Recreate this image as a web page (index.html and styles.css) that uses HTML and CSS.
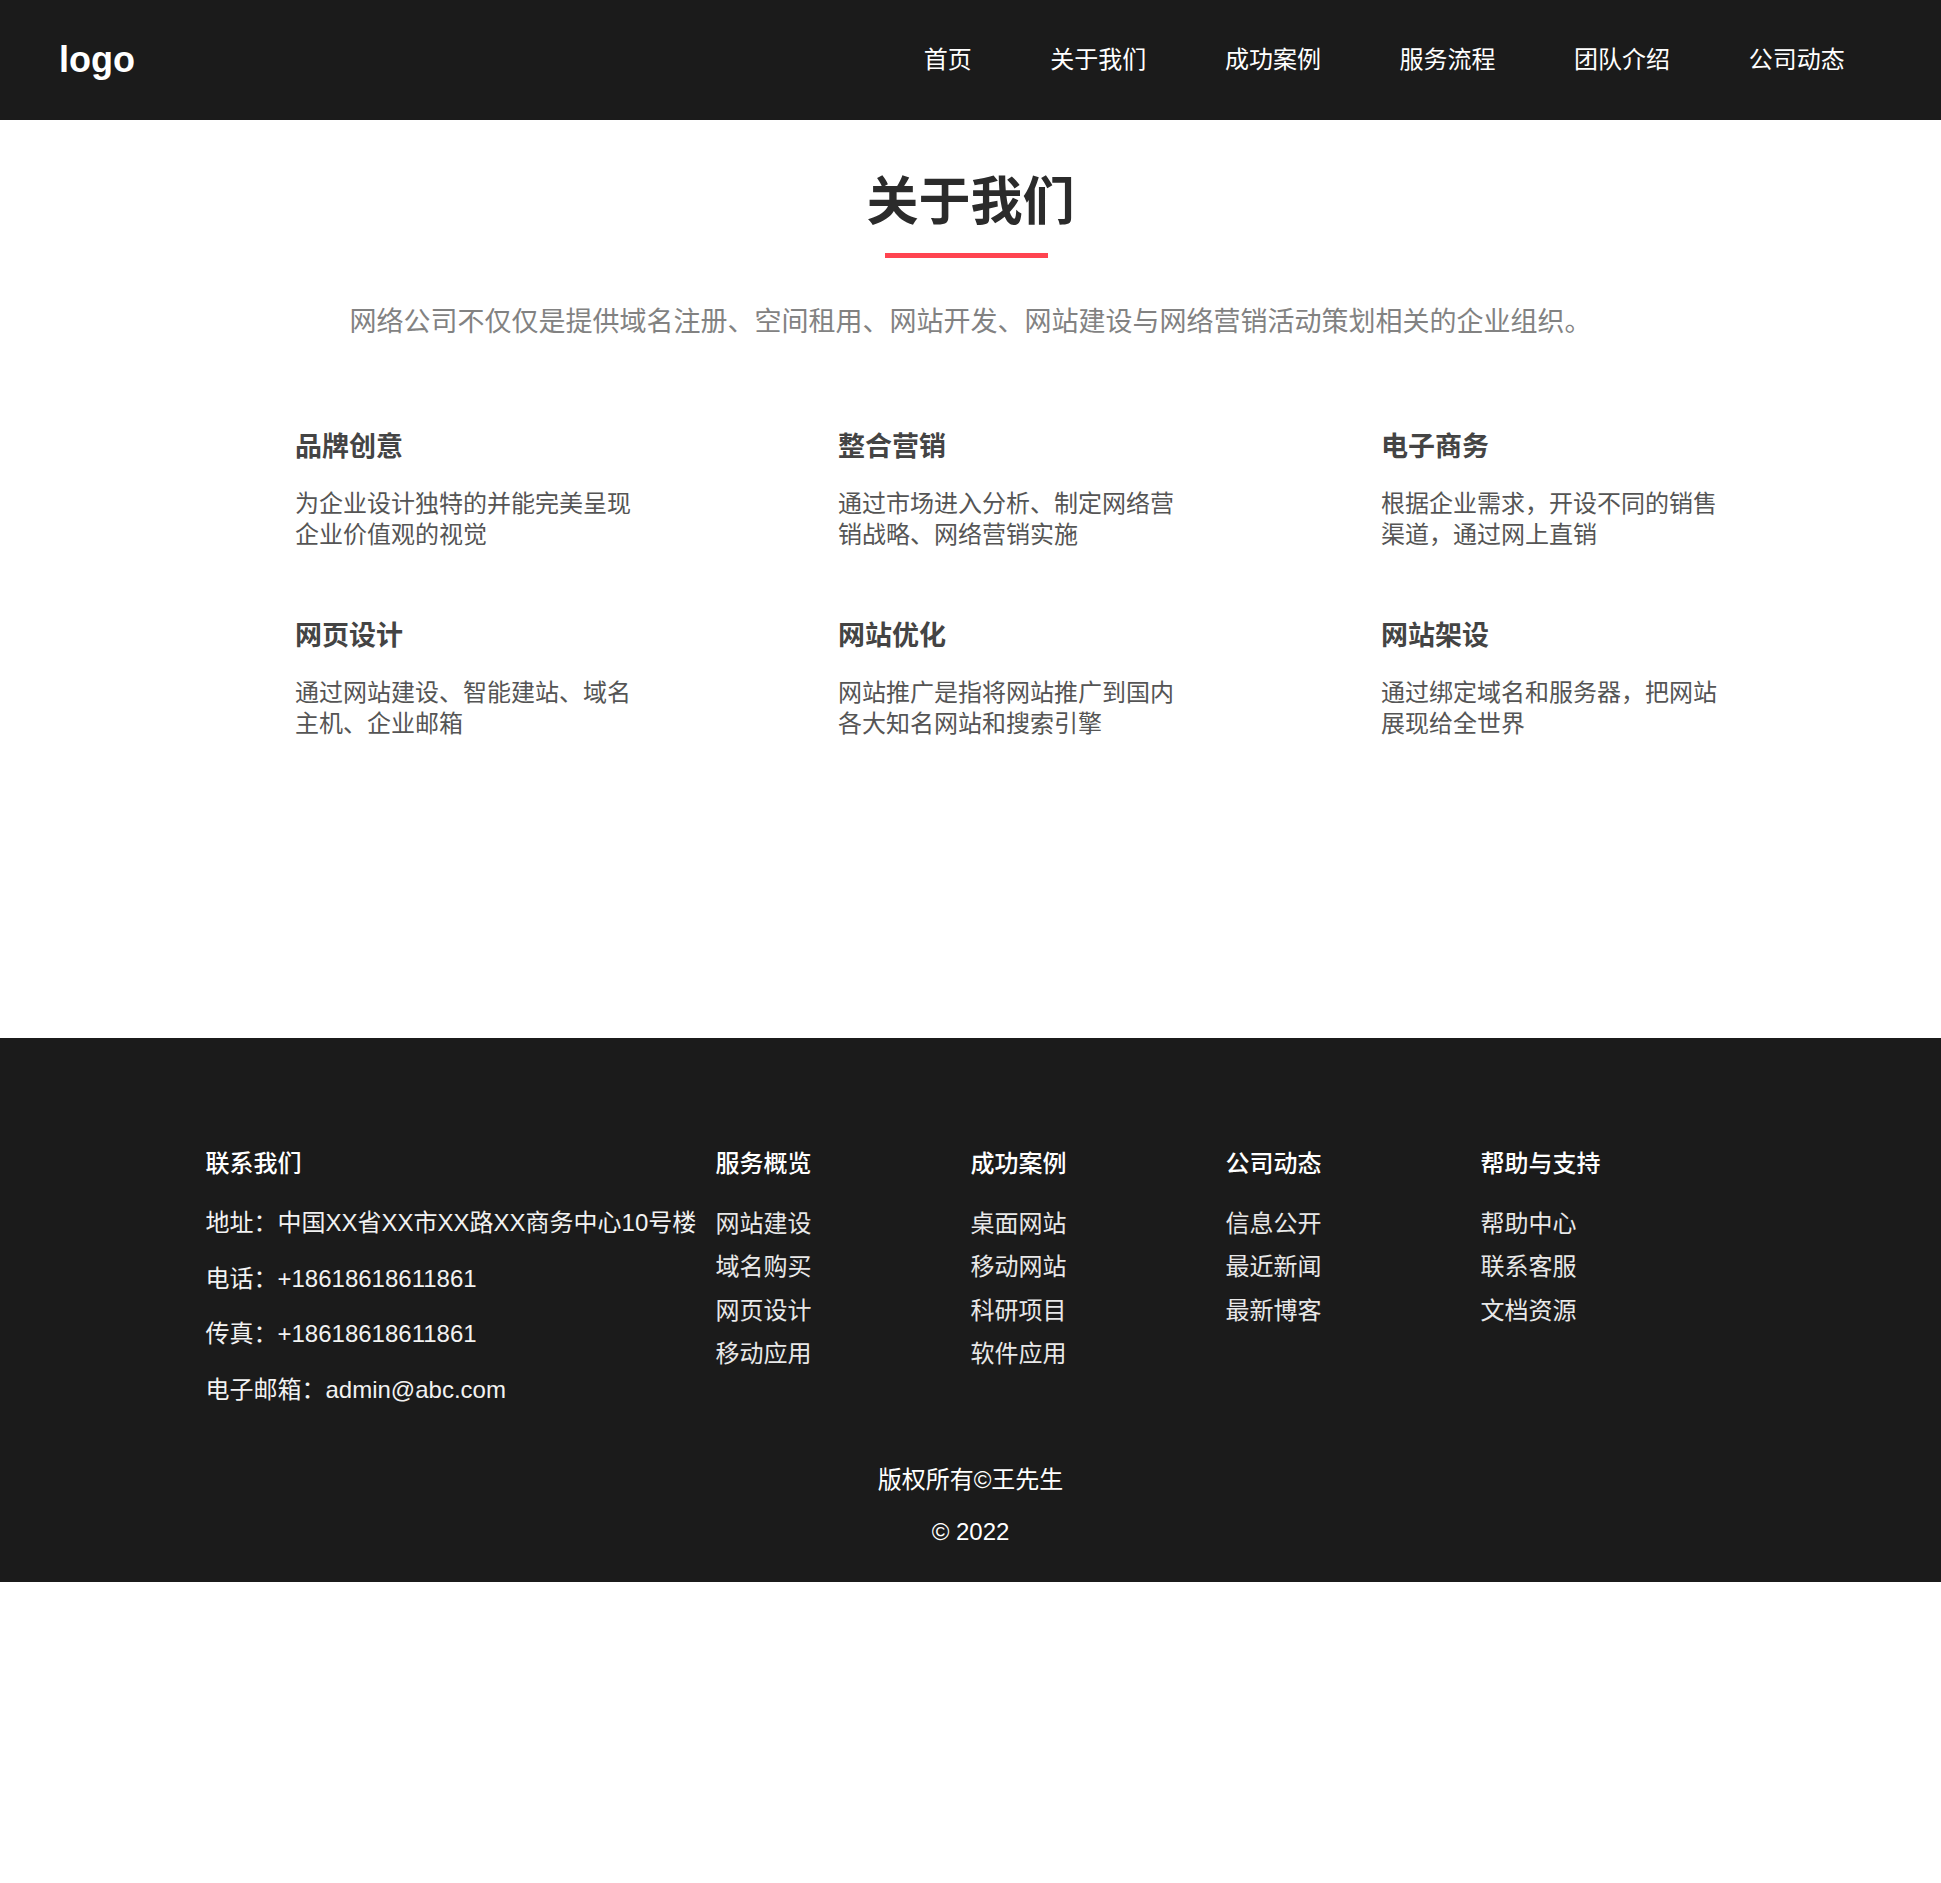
FILE: index.html
```html
<!DOCTYPE html>
<html lang="zh-CN">
<head>
<meta charset="utf-8">
<title>关于我们</title>
<link rel="stylesheet" href="styles.css">
</head>
<body>
<header class="site-header">
  <div class="logo">logo</div>
  <nav class="nav">
    <a href="#">首页</a>
    <a href="#">关于我们</a>
    <a href="#">成功案例</a>
    <a href="#">服务流程</a>
    <a href="#">团队介绍</a>
    <a href="#">公司动态</a>
  </nav>
</header>

<main class="about">
  <h1 class="about-title">关于我们</h1>
  <div class="about-line"></div>
  <p class="about-sub">网络公司不仅仅是提供域名注册、空间租用、网站开发、网站建设与网络营销活动策划相关的企业组织。</p>

  <div class="features">
    <div class="feature">
      <h3>品牌创意</h3>
      <p>为企业设计独特的并能完美呈现企业价值观的视觉</p>
    </div>
    <div class="feature">
      <h3>整合营销</h3>
      <p>通过市场进入分析、制定网络营销战略、网络营销实施</p>
    </div>
    <div class="feature">
      <h3>电子商务</h3>
      <p>根据企业需求，开设不同的销售渠道，通过网上直销</p>
    </div>
    <div class="feature">
      <h3>网页设计</h3>
      <p>通过网站建设、智能建站、域名主机、企业邮箱</p>
    </div>
    <div class="feature">
      <h3>网站优化</h3>
      <p>网站推广是指将网站推广到国内各大知名网站和搜索引擎</p>
    </div>
    <div class="feature">
      <h3>网站架设</h3>
      <p>通过绑定域名和服务器，把网站展现给全世界</p>
    </div>
  </div>
</main>

<footer class="site-footer">
  <div class="footer-cols">
    <div class="fcol contact">
      <h4>联系我们</h4>
      <p>地址：中国XX省XX市XX路XX商务中心10号楼</p>
      <p>电话：+18618618611861</p>
      <p>传真：+18618618611861</p>
      <p>电子邮箱：admin@abc.com</p>
    </div>
    <div class="fcol">
      <h4>服务概览</h4>
      <ul>
        <li>网站建设</li>
        <li>域名购买</li>
        <li>网页设计</li>
        <li>移动应用</li>
      </ul>
    </div>
    <div class="fcol">
      <h4>成功案例</h4>
      <ul>
        <li>桌面网站</li>
        <li>移动网站</li>
        <li>科研项目</li>
        <li>软件应用</li>
      </ul>
    </div>
    <div class="fcol">
      <h4>公司动态</h4>
      <ul>
        <li>信息公开</li>
        <li>最近新闻</li>
        <li>最新博客</li>
      </ul>
    </div>
    <div class="fcol">
      <h4>帮助与支持</h4>
      <ul>
        <li>帮助中心</li>
        <li>联系客服</li>
        <li>文档资源</li>
      </ul>
    </div>
  </div>
  <div class="copyright">
    <p class="copy-1">版权所有©王先生</p>
    <p class="copy-2">© 2022</p>
  </div>
</footer>
</body>
</html>
```

FILE: styles.css
```css
* {
  box-sizing: border-box;
}

body {
  margin: 0;
  background: #ffffff;
  font-family: "Liberation Sans", "Noto Sans CJK SC", sans-serif;
}

/* Header */
.site-header {
  height: 120px;
  background: #1b1b1b;
  display: flex;
  align-items: center;
  justify-content: space-between;
  padding: 0 57px 0 59px;
}

.logo {
  color: #ffffff;
  font-size: 36px;
  font-weight: bold;
  line-height: 1;
}

.nav {
  display: flex;
  align-items: center;
}

.nav a {
  color: #ffffff;
  text-decoration: none;
  font-size: 24px;
  line-height: 34px;
  padding: 0 39.3px;
}

/* About */
.about {
  padding: 50px 0 299px;
}

.about-title {
  margin: 0;
  text-align: center;
  font-size: 52px;
  line-height: 64px;
  font-weight: bold;
  color: #2b2b2b;
}

.about-line {
  width: 163px;
  height: 5px;
  background: #ff4450;
  margin: 19px 0 0 calc(50% - 86px);
}

.about-sub {
  margin: 44px 0 0;
  text-align: center;
  font-size: 27px;
  line-height: 40px;
  color: #828282;
}

.features {
  display: grid;
  grid-template-columns: repeat(3, 543px);
  row-gap: 69px;
  padding-left: 295px;
  margin-top: 88px;
}

.feature h3 {
  margin: 0;
  font-size: 27px;
  line-height: 34px;
  font-weight: bold;
  color: #444444;
}

.feature p {
  margin: 24px 0 0;
  width: 340px;
  font-size: 24px;
  line-height: 31px;
  color: #555555;
}

/* Footer */
.site-footer {
  background: #1b1b1b;
  padding: 109px 0 33px;
  color: #ffffff;
}

.footer-cols {
  width: 1530px;
  margin: 0 auto;
  display: grid;
  grid-template-columns: 510px repeat(4, 255px);
}

.fcol h4 {
  margin: 0;
  font-size: 24px;
  line-height: 34px;
  font-weight: 500;
  color: #ffffff;
}

.fcol ul {
  list-style: none;
  margin: 21px 0 0;
  padding: 0;
}

.fcol li {
  font-size: 24px;
  line-height: 43.3px;
  color: #e8e8e8;
}

.contact p {
  margin: 0;
  font-size: 24px;
  line-height: 55.5px;
  color: #f2f2f2;
}

.contact h4 {
  margin-bottom: 14px;
}

.copyright {
  margin-top: 46px;
  text-align: center;
}

.copyright p {
  margin: 0;
  font-size: 24px;
  line-height: 34px;
  color: #ffffff;
}

.copyright .copy-2 {
  margin-top: 18px;
}
```
